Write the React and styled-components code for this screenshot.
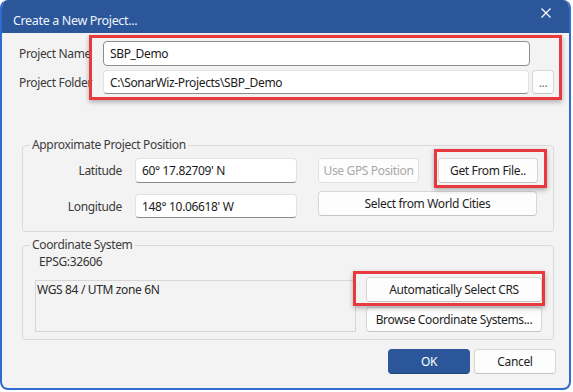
import React from 'react'
import styled, { createGlobalStyle } from 'styled-components'

const GlobalStyle = createGlobalStyle`
  body {
    margin: 0;
    background: #ffffff;
    font-family: 'Segoe UI', 'Noto Sans', sans-serif;
  }
`

const Window = styled.div`
  width: 571px;
  height: 390px;
  box-sizing: border-box;
  border: 2px solid #2f6bd0;
  border-top: none;
  border-radius: 8px;
  overflow: hidden;
  background: #f3f3f3;
  display: flex;
  flex-direction: column;
  font-size: 12px;
  letter-spacing: -0.35px;
  color: #333;
`

const TitleBar = styled.div`
  height: 33px;
  flex: none;
  background: #2b579a;
  display: flex;
  justify-content: space-between;
  align-items: flex-start;
  padding: 0 18px 0 11px;
`

const Title = styled.div`
  margin-top: 13px;
  font-size: 12.5px;
  line-height: 16px;
  color: #eef3fa;
`

const Close = styled.svg`
  margin-top: 8px;
  width: 10px;
  height: 10px;
`

const Body = styled.div`
  flex: 1;
  display: flex;
  flex-direction: column;
  padding: 8px 15px 0 17px;
`

const TopSection = styled.div`
  display: flex;
`

const Labels = styled.div`
  width: 84px;
  flex: none;
  display: flex;
  flex-direction: column;
  gap: 4px;
`

const Label = styled.div`
  height: ${p => p.$h || 25}px;
  display: flex;
  align-items: center;
  white-space: nowrap;
  color: #3a3a3a;
`

const Mark = styled.div`
  position: relative;
  flex: ${p => (p.$grow ? 1 : 'none')};
  &::after {
    content: '';
    position: absolute;
    inset: ${p => p.$inset};
    border: 3px solid #e8393e;
    box-shadow: 0 2px 5px rgba(0, 0, 0, 0.3);
    pointer-events: none;
  }
`

const Fields = styled.div`
  display: flex;
  flex-direction: column;
  gap: 4px;
`

const FieldRow = styled.div`
  display: flex;
  gap: 3px;
`

const Input = styled.div`
  flex: ${p => (p.$w ? 'none' : 1)};
  width: ${p => (p.$w ? `${p.$w}px` : 'auto')};
  height: ${p => p.$h || 25}px;
  box-sizing: border-box;
  background: #ffffff;
  border: 1px solid ${p => (p.$focus ? '#8d8d8d' : '#e2e2e2')};
  border-bottom-color: ${p => (p.$focus ? '#8d8d8d' : '#8a8a8a')};
  border-radius: 4px;
  padding: 0 6px;
  display: flex;
  align-items: center;
  color: #1b1b1b;
  white-space: nowrap;
  align-self: ${p => p.$align || 'auto'};
`

const Spacer = styled.div`
  width: 21px;
  flex: none;
`

const Button = styled.button`
  width: ${p => (p.$w ? `${p.$w}px` : '100%')};
  height: ${p => p.$h || 25}px;
  flex: none;
  box-sizing: border-box;
  padding: 0;
  font-family: inherit;
  font-size: 12px;
  letter-spacing: inherit;
  border-radius: 4px;
  border: 1px solid ${p => (p.$primary ? '#2b579a' : '#d6d6d6')};
  border-bottom-color: ${p => (p.$primary ? '#1f447c' : '#c4c4c4')};
  background: ${p => (p.$primary ? '#2b579a' : '#fdfdfd')};
  color: ${p => (p.$primary ? '#ffffff' : p.disabled ? '#a8a8a8' : '#1f1f1f')};
  border-color: ${p => (p.disabled ? '#e0e0e0' : undefined)};
  align-self: ${p => p.$align || 'auto'};
  white-space: nowrap;
`

const Group = styled.fieldset`
  margin: ${p => p.$top}px 0 0 3px;
  padding: 0;
  border: 1px solid #d9d9d9;
  border-radius: 4px;
  min-width: 0;
`

const Legend = styled.legend`
  margin-left: 7px;
  padding: 0 2px;
  font-size: 12px;
  line-height: 16px;
  color: #3c3c3c;
`

const PositionGrid = styled.div`
  display: grid;
  grid-template-columns: 99px 162px 1fr;
  grid-template-rows: 25px 27px;
  column-gap: 13px;
  row-gap: 8px;
  padding: 5px 16px 13px 0;
`

const GridLabel = styled.div`
  text-align: right;
  align-self: center;
  color: #3a3a3a;
  margin-top: ${p => (p.$low ? 3 : 0)}px;
`

const ButtonCell = styled.div`
  display: flex;
  gap: 19px;
  padding-left: 8px;
`

const Epsg = styled.div`
  margin-top: 1px;
  padding-left: 16px;
  line-height: 16px;
  color: #333;
`

const CrsRow = styled.div`
  display: flex;
  align-items: flex-end;
  gap: 10px;
  margin-top: 7px;
  padding: 0 11px 7px 12px;
`

const ListBox = styled.div`
  flex: 1;
  height: 52px;
  box-sizing: border-box;
  border: 1px solid #d6d6d6;
  background: #f3f3f3;
  padding: 1px 1px;
  line-height: 16px;
  color: #2a2a2a;
`

const CrsButtons = styled.div`
  width: 176px;
  display: flex;
  flex-direction: column;
  gap: 5px;
`

const Footer = styled.div`
  display: flex;
  justify-content: flex-end;
  gap: 4px;
  margin: 9px -2px 0 0;
`

export default function App() {
  return (
    <>
      <GlobalStyle />
      <Window>
        <TitleBar>
          <Title>Create a New Project...</Title>
          <Close viewBox="0 0 10 10">
            <path d="M0.5 0.5 L9.5 9.5 M9.5 0.5 L0.5 9.5" stroke="#ffffff" strokeWidth="1.2" />
          </Close>
        </TitleBar>
        <Body>
          <TopSection>
            <Labels>
              <Label>Project Name</Label>
              <Label $h={24}>Project Folder</Label>
            </Labels>
            <Mark $grow $inset="-6px -8px -6px -14px">
              <Fields>
                <FieldRow>
                  <Input $focus>SBP_Demo</Input>
                  <Spacer />
                </FieldRow>
                <FieldRow>
                  <Input $h={24}>C:\SonarWiz-Projects\SBP_Demo</Input>
                  <Button $w={22} $h={24} style={{ color: '#777' }}>...</Button>
                </FieldRow>
              </Fields>
            </Mark>
          </TopSection>

          <Group $top={43}>
            <Legend>Approximate Project Position</Legend>
            <PositionGrid>
              <GridLabel>Latitude</GridLabel>
              <Input $w={162}>60° 17.82709' N</Input>
              <ButtonCell>
                <Button $w={101} disabled>Use GPS Position</Button>
                <Mark $inset="-9px -9px -5px -4px">
                  <Button $w={100}>Get From File..</Button>
                </Mark>
              </ButtonCell>
              <GridLabel $low>Longitude</GridLabel>
              <Input $w={162} $h={24} $align="end">148° 10.06618' W</Input>
              <ButtonCell>
                <Button $w={219} $align="start">Select from World Cities</Button>
              </ButtonCell>
            </PositionGrid>
          </Group>

          <Group $top={5}>
            <Legend>Coordinate System</Legend>
            <Epsg>EPSG:32606</Epsg>
            <CrsRow>
              <ListBox>WGS 84 / UTM zone 6N</ListBox>
              <CrsButtons>
                <Mark $inset="-6px -3px -4px -13px">
                  <Button>Automatically Select CRS</Button>
                </Mark>
                <Button>Browse Coordinate Systems...</Button>
              </CrsButtons>
            </CrsRow>
          </Group>

          <Footer>
            <Button $w={82} $primary>OK</Button>
            <Button $w={82}>Cancel</Button>
          </Footer>
        </Body>
      </Window>
    </>
  )
}
